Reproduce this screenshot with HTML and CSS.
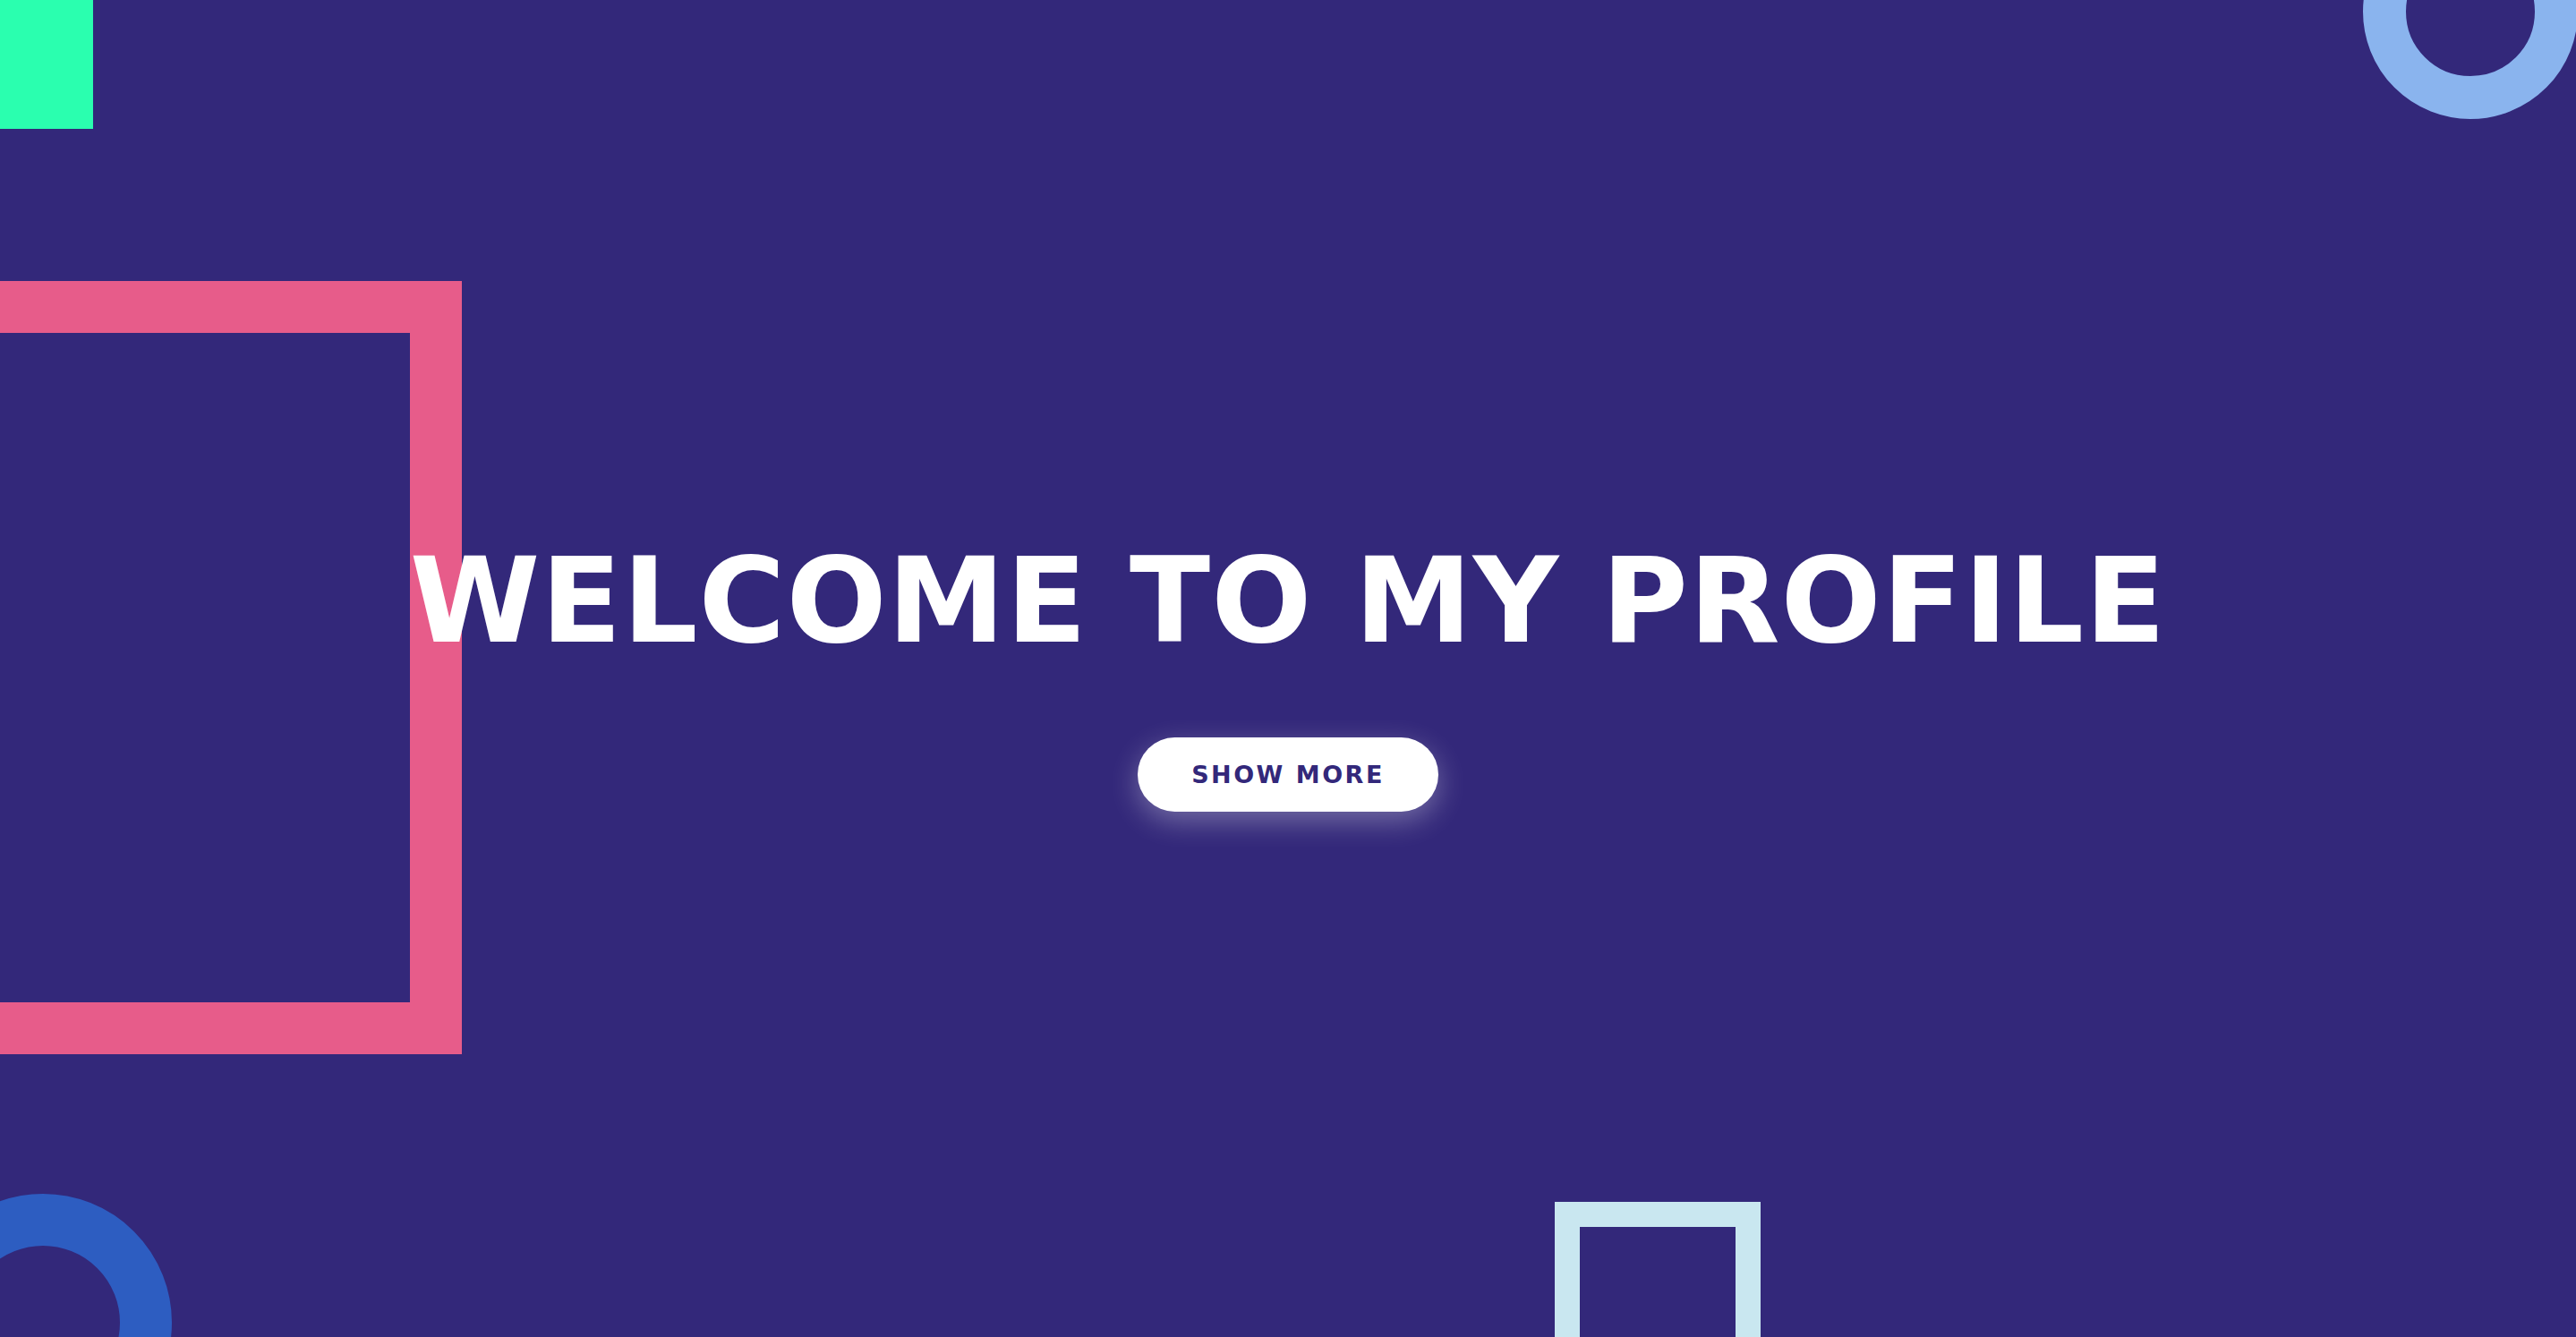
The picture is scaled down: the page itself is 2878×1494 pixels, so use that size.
FILE: index.html
```html
<!DOCTYPE html>
<html lang="en">
<head>
<meta charset="utf-8">
<title>Welcome to my profile</title>
<link rel="stylesheet" href="styles.css">
</head>
<body>
<main class="hero">
  <div class="shape shape-green"></div>
  <div class="shape shape-pink"></div>
  <div class="shape ring ring-light"></div>
  <div class="shape ring ring-blue"></div>
  <div class="shape shape-frame"></div>
  <div class="hero-content">
    <h1 class="hero-title">WELCOME TO MY PROFILE</h1>
    <a class="hero-button" href="#">SHOW MORE</a>
  </div>
</main>
</body>
</html>
```
FILE: styles.css
```css
* { box-sizing: border-box; }
html, body {
  margin: 0;
  padding: 0;
  height: 100%;
}
body {
  background: #33287a;
  font-family: "DejaVu Sans", "Liberation Sans", sans-serif;
  overflow: hidden;
}
.hero {
  position: relative;
  width: 100%;
  height: 100vh;
  overflow: hidden;
  display: flex;
  align-items: center;
  justify-content: center;
}
.shape { position: absolute; }
.shape-green {
  left: 0;
  top: 0;
  width: 104px;
  height: 144px;
  background: #2affaf;
}
.shape-pink {
  left: -348px;
  top: 314px;
  width: 864px;
  height: 864px;
  border: 58px solid #e75c8a;
}
.ring { border-radius: 50%; }
.ring-light {
  left: 2640px;
  top: -107px;
  width: 240px;
  height: 240px;
  border: 48px solid #8ab4ee;
}
.ring-blue {
  left: -96px;
  top: 1334px;
  width: 288px;
  height: 288px;
  border: 58px solid #2d5dc1;
}
.shape-frame {
  left: 1737px;
  top: 1343px;
  width: 230px;
  height: 230px;
  border: 28px solid #c9e7f0;
}
.hero-content {
  position: relative;
  z-index: 1;
  display: flex;
  flex-direction: column;
  align-items: center;
  gap: 87px;
  padding-top: 18px;
}
.hero-title {
  margin: 0;
  color: #ffffff;
  font-family: "DejaVu Sans", sans-serif;
  font-weight: 700;
  font-size: 132px;
  line-height: 1;
  letter-spacing: 1px;
  white-space: nowrap;
}
.hero-button {
  display: flex;
  align-items: center;
  justify-content: center;
  width: 336px;
  height: 83px;
  border-radius: 42px;
  background: #ffffff;
  color: #33287a;
  text-decoration: none;
  font-family: "DejaVu Sans", sans-serif;
  font-weight: 700;
  font-size: 27px;
  letter-spacing: 2.5px;
  box-shadow: 0 10px 32px rgba(255, 255, 255, 0.32);
}
```
